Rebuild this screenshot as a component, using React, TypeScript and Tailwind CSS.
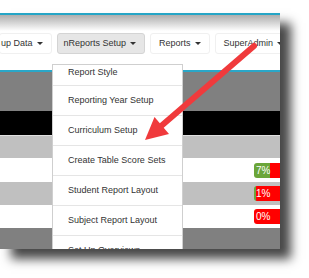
import React from "react";

const items = [
  "Report Style",
  "Reporting Year Setup",
  "Curriculum Setup",
  "Create Table Score Sets",
  "Student Report Layout",
  "Subject Report Layout",
  "Set Up Overviews",
];

function Caret() {
  return (
    <span className="ml-[4px] inline-block w-0 h-0 border-l-[3px] border-r-[3px] border-t-[3px] border-l-transparent border-r-transparent border-t-[#333]" />
  );
}

function NavBtn({ label, active, className = "" }: { label: string; active?: boolean; className?: string }) {
  return (
    <div
      className={
        "h-[21px] flex items-center shrink-0 rounded-[3px] border text-[9px] text-[#333] " +
        (active ? "bg-[#e6e6e6] border-[#d4d4d4] " : "bg-white border-[#f0f0f0] ") +
        className
      }
    >
      <span>{label}</span>
      <Caret />
    </div>
  );
}

function Bar({ green, label }: { green: number; label: string }) {
  return (
    <div className="relative flex h-[15px] w-[40px] shrink-0 rounded-[3px] overflow-hidden">
      <div className="bg-[#6ba539]" style={{ width: green }} />
      <div className="flex-1 bg-[#ff0000]" />
      <span className="absolute left-[2px] top-0 h-full flex items-center text-[10px] text-white">{label}</span>
    </div>
  );
}

export default function App() {
  return (
    <div className="relative w-[309px] h-[278px] bg-white overflow-hidden font-['Liberation_Sans',Arial,sans-serif]">
      <div className="pt-[13px]">
        <div className="relative w-[280px] h-[236px] bg-white overflow-hidden shadow-[11px_10px_10px_rgba(0,0,0,0.72)]">
          <div className="h-[2px] bg-[#25a5c6]" />
          <div className="h-[16px] bg-linear-to-b from-[#aeaeae] to-white" />
          <div className="h-[26px] flex items-start pt-[2px] gap-[5px]">
            <NavBtn label="up Data" className="pl-[1px] pr-[8px] -ml-[1px]" />
            <NavBtn label="nReports Setup" active className="pl-[6px] pr-[8px]" />
            <NavBtn label="Reports" className="pl-[8px] pr-[8px]" />
            <NavBtn label="SuperAdmin" className="pl-[8px] pr-[4px]" />
          </div>
          <div className="h-[13px]" />
          <div className="h-[2px] bg-[#2aa7c8]" />
          <div className="h-[39px] bg-[#808080]" />
          <div className="h-[24px] bg-black" />
          <div className="h-[23px] bg-[#c0c0c0] border-t border-[#e0e0e0]" />
          <div className="h-[24px] bg-white flex items-center pl-[254px]">
            <Bar green={16} label="7%" />
          </div>
          <div className="h-[23px] bg-[#c0c0c0] flex items-center pl-[254px]">
            <Bar green={2} label="1%" />
          </div>
          <div className="h-[23px] bg-white flex items-center pl-[254px]">
            <Bar green={0} label="0%" />
          </div>
          <div className="h-[21px] bg-[#808080]" />

          <div className="absolute left-[52px] top-[51px] w-[131px] h-[200px] bg-white border border-[#cfcfcf] text-[9px] text-[#333]">
            {items.map((t, i) => (
              <div
                key={t}
                className={
                  "flex pl-[15px] border-[#e5e5e5] " +
                  (i === 0 ? "h-[21px] items-start pt-[1px] border-b" : "h-[30px] items-center border-b")
                }
              >
                {t}
              </div>
            ))}
          </div>
        </div>
      </div>

      <svg className="absolute left-0 top-0" width="309" height="278" viewBox="0 0 309 278">
        <line x1="254" y1="46" x2="160" y2="127" stroke="#f03a3c" strokeWidth="6" strokeLinecap="round" />
        <polygon points="145,140 169,134 154.5,117" fill="#f03a3c" />
      </svg>
    </div>
  );
}
